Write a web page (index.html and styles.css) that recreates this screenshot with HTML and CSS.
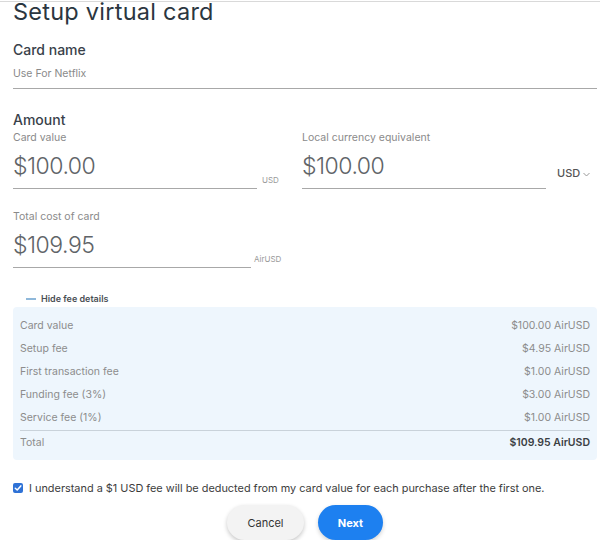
FILE: index.html
```html
<!DOCTYPE html>
<html>
<head>
<meta charset="utf-8">
<link rel="stylesheet" href="styles.css">
</head>
<body>
<div class="topline"></div>
<div class="page">
  <h1 class="title">Setup virtual card</h1>

  <div class="section-label name-label">Card name</div>
  <div class="text-field">Use For Netflix</div>

  <div class="section-label amount-label">Amount</div>
  <div class="amount-grid">
    <div class="col">
      <div class="field-label">Card value</div>
      <div class="value-row">
        <div class="value-field">$100.00</div>
        <span class="unit">USD</span>
      </div>
    </div>
    <div class="col">
      <div class="field-label">Local currency equivalent</div>
      <div class="value-row">
        <div class="value-field">$100.00</div>
        <span class="currency">USD <svg class="chev" width="7" height="5" viewBox="0 0 7 5"><path d="M0.5 1 L3.5 4 L6.5 1" fill="none" stroke="#999" stroke-width="1"/></svg></span>
      </div>
    </div>
    <div class="col">
      <div class="field-label total-label">Total cost of card</div>
      <div class="value-row">
        <div class="value-field total-field">$109.95</div>
        <span class="unit airusd">AirUSD</span>
      </div>
    </div>
  </div>

  <div class="fee-toggle"><span class="dash"></span>Hide fee details</div>

  <div class="fee-box">
    <div class="fee-row"><span>Card value</span><span>$100.00 AirUSD</span></div>
    <div class="fee-row"><span>Setup fee</span><span>$4.95 AirUSD</span></div>
    <div class="fee-row"><span>First transaction fee</span><span>$1.00 AirUSD</span></div>
    <div class="fee-row"><span>Funding fee (3%)</span><span>$3.00 AirUSD</span></div>
    <div class="fee-row"><span>Service fee (1%)</span><span>$1.00 AirUSD</span></div>
    <div class="fee-row total-row"><span>Total</span><span class="total-value">$109.95 AirUSD</span></div>
  </div>

  <label class="agree">
    <span class="checkbox"><svg width="8" height="8" viewBox="0 0 8 8"><path d="M1.3 4.2 L3.2 6 L6.8 1.9" fill="none" stroke="#fff" stroke-width="1.5" stroke-linecap="round" stroke-linejoin="round"/></svg></span>
    I understand a $1 USD fee will be deducted from my card value for each purchase after the first one.
  </label>

  <div class="actions">
    <button class="btn btn-cancel">Cancel</button>
    <button class="btn btn-next">Next</button>
  </div>
</div>
</body>
</html>
```

FILE: styles.css
```css
* { box-sizing: border-box; }
html, body { margin: 0; padding: 0; background: #fff; }
body {
  font-family: Inter, "Noto Sans", "Liberation Sans", sans-serif;
  color: #333;
  padding-top: 1px;
}
.topline { height: 1px; background: #d9d9d9; }
.page { padding: 0 3px 0 13px; }

.title {
  margin: 0;
  font-size: 23.5px;
  line-height: 20px;
  font-weight: 400;
  color: #2b3640;
  letter-spacing: 0.25px;
}

.section-label {
  font-size: 14px;
  line-height: 16px;
  font-weight: 500;
  color: #39414a;
}
.name-label { margin-top: 20px; }
.amount-label { margin-top: 23px; }

.text-field {
  margin-top: 9px;
  font-size: 10.5px;
  line-height: 14px;
  color: #8a8a8a;
  padding-bottom: 7px;
  border-bottom: 1px solid #a8a8a8;
}

.amount-grid {
  display: grid;
  grid-template-columns: 289px 1fr;
  row-gap: 21px;
  margin-top: 3px;
}
.field-label {
  font-size: 10.5px;
  line-height: 14px;
  color: #8a8a8a;
}
.value-row {
  display: flex;
  align-items: flex-end;
  margin-top: 7px;
}
.value-field {
  width: 244px;
  font-size: 23px;
  line-height: 28px;
  font-weight: 300;
  letter-spacing: -0.5px;
  color: #5f6468;
  padding-bottom: 8px;
  border-bottom: 1px solid #a8a8a8;
}
.total-field { width: 238px; }
.unit {
  font-size: 8px;
  line-height: 10px;
  color: #9a9a9a;
  margin-left: 5px;
  margin-bottom: 4px;
}
.airusd { margin-left: 3px; margin-bottom: 4px; }
.currency {
  margin-left: 11px;
  margin-bottom: 9px;
  font-size: 11px;
  line-height: 14px;
  font-weight: 500;
  color: #555;
  display: flex;
  align-items: center;
  gap: 3px;
}
.chev { margin-top: 2px; }

.fee-toggle {
  display: flex;
  align-items: center;
  margin-top: 25px;
  padding-left: 13px;
  font-size: 9px;
  line-height: 12px;
  font-weight: 600;
  color: #4a4f55;
}
.dash {
  display: inline-block;
  width: 10px;
  height: 2px;
  background: #8fb8da;
  margin-right: 5px;
}

.fee-box {
  margin-top: 2px;
  background: #eef6fd;
  border-radius: 4px;
  padding: 7px 7px 6px 7px;
}
.fee-row {
  display: flex;
  justify-content: space-between;
  font-size: 10.5px;
  line-height: 23px;
  color: #8c8c8c;
}
.total-row {
  margin-top: 1px;
  border-top: 1px solid #c9d2da;
}
.total-value { font-weight: 600; color: #3b3f44; }

.agree {
  display: flex;
  align-items: center;
  margin-top: 21px;
  font-size: 10.9px;
  line-height: 14px;
  color: #3c3c3c;
}
.checkbox {
  width: 10px;
  height: 10px;
  border-radius: 2px;
  background: #2f72d6;
  display: inline-flex;
  align-items: center;
  justify-content: center;
  margin-right: 6px;
  flex: none;
}

.actions {
  display: flex;
  justify-content: center;
  gap: 14px;
  margin-top: 10px;
}
.btn {
  height: 35px;
  border: none;
  border-radius: 18px;
  font-family: Inter, "Noto Sans", "Liberation Sans", sans-serif;
  font-size: 11px;
  padding: 0;
}
.btn-cancel {
  width: 77px;
  background: #f3f3f3;
  color: #333;
  box-shadow: 0 2px 4px rgba(0,0,0,0.22);
}
.btn-next {
  width: 65px;
  background: #1d80f0;
  color: #fff;
  font-weight: 700;
  box-shadow: 0 2px 4px rgba(0,0,0,0.18);
}
```
